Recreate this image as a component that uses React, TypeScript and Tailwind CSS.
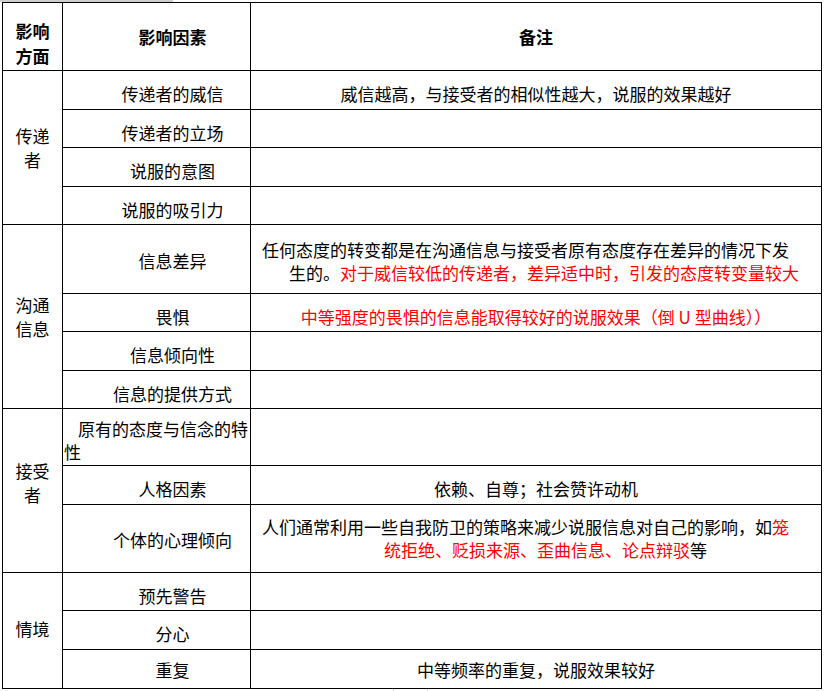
import React from "react";

const cell = "border border-black p-0 align-middle";
const mid = `${cell} text-center pl-[34px] pr-[2px]`;
const note = `${cell} text-center px-[4px]`;
const red = "text-[#ff0000]";

export default function App() {
  return (
    <div
      className="w-[824px] h-[691px] bg-white text-black text-[17px] leading-[23px] relative overflow-hidden"
      style={{ fontFamily: '"Noto Sans CJK SC", "Noto Sans", sans-serif' }}
    >
      {/* strip above the table */}
      <div className="h-[2px] w-[173px] bg-[#cfcfcf]" />
      <table className="ml-[2px] border-collapse table-fixed w-[820px]">
        <colgroup>
          <col className="w-[60px]" />
          <col className="w-[188px]" />
          <col />
        </colgroup>
        <tbody>
          {/* Header */}
          <tr className="h-[68px]">
            <td className={`${cell} text-center font-bold leading-[25px] pt-[12px]`}>
              影响
              <br />
              方面
            </td>
            <td className={`${mid} font-bold`}>影响因素</td>
            <td className={`${cell} text-center font-bold`}>备注</td>
          </tr>

          {/* 传递者 */}
          <tr className="h-[39px]">
            <td rowSpan={4} className={`${cell} text-center leading-[24px]`}>
              传递
              <br />者
            </td>
            <td className={`${mid} pt-[7px]`}>传递者的威信</td>
            <td className={`${note} pt-[7px]`}>威信越高，与接受者的相似性越大，说服的效果越好</td>
          </tr>
          <tr className="h-[38px]">
            <td className={`${mid} pt-[7px]`}>传递者的立场</td>
            <td className={cell} />
          </tr>
          <tr className="h-[39px]">
            <td className={`${mid} pt-[7px]`}>说服的意图</td>
            <td className={cell} />
          </tr>
          <tr className="h-[38px]">
            <td className={`${mid} pt-[7px]`}>说服的吸引力</td>
            <td className={cell} />
          </tr>

          {/* 沟通信息 */}
          <tr className="h-[69px]">
            <td rowSpan={4} className={`${cell} text-center leading-[24px]`}>
              沟通
              <br />
              信息
            </td>
            <td className={`${mid} pt-[3px]`}>信息差异</td>
            <td className={`${cell} text-left whitespace-nowrap pt-[4px]`}>
              <div className="pl-[11px]">任何态度的转变都是在沟通信息与接受者原有态度存在差异的情况下发</div>
              <div className="pl-[38px]">
                生的。<span className={red}>对于威信较低的传递者，差异适中时，引发的态度转变量较大</span>
              </div>
            </td>
          </tr>
          <tr className="h-[38px]">
            <td className={`${mid} pt-[7px]`}>畏惧</td>
            <td className={`${note} pt-[7px] ${red}`}>中等强度的畏惧的信息能取得较好的说服效果（倒 U 型曲线））</td>
          </tr>
          <tr className="h-[39px]">
            <td className={`${mid} pt-[7px]`}>信息倾向性</td>
            <td className={cell} />
          </tr>
          <tr className="h-[38px]">
            <td className={`${mid} pt-[7px]`}>信息的提供方式</td>
            <td className={cell} />
          </tr>

          {/* 接受者 */}
          <tr className="h-[57px]">
            <td rowSpan={3} className={`${cell} text-center leading-[24px] pb-[16px]`}>
              接受
              <br />者
            </td>
            <td className={`${cell} text-left whitespace-nowrap pl-[1px] pt-[5px]`}>
              <div className="pl-[14px]">原有的态度与信念的特</div>
              <div>性</div>
            </td>
            <td className={cell} />
          </tr>
          <tr className="h-[39px]">
            <td className={`${mid} pt-[7px]`}>人格因素</td>
            <td className={`${note} pt-[7px]`}>依赖、自尊；社会赞许动机</td>
          </tr>
          <tr className="h-[68px]">
            <td className={`${mid} pt-[1px]`}>个体的心理倾向</td>
            <td className={`${cell} text-left whitespace-nowrap pb-[2px]`}>
              <div className="pl-[11px]">
                人们通常利用一些自我防卫的策略来减少说服信息对自己的影响，如<span className={red}>笼</span>
              </div>
              <div className="pl-[133px]">
                <span className={red}>统拒绝、贬损来源、歪曲信息、论点辩驳</span>等
              </div>
            </td>
          </tr>

          {/* 情境 */}
          <tr className="h-[38px]">
            <td rowSpan={3} className={`${cell} text-center pb-[5px]`}>
              情境
            </td>
            <td className={`${mid} pt-[7px]`}>预先警告</td>
            <td className={cell} />
          </tr>
          <tr className="h-[39px]">
            <td className={`${mid} pt-[7px]`}>分心</td>
            <td className={cell} />
          </tr>
          <tr className="h-[39px]">
            <td className={mid}>重复</td>
            <td className={note}>中等频率的重复，说服效果较好</td>
          </tr>
        </tbody>
      </table>
      {/* small tab below the table */}
      <div className="ml-[393px] w-[35px] h-[3px] border-x border-[#d0d0d0]" />
    </div>
  );
}
